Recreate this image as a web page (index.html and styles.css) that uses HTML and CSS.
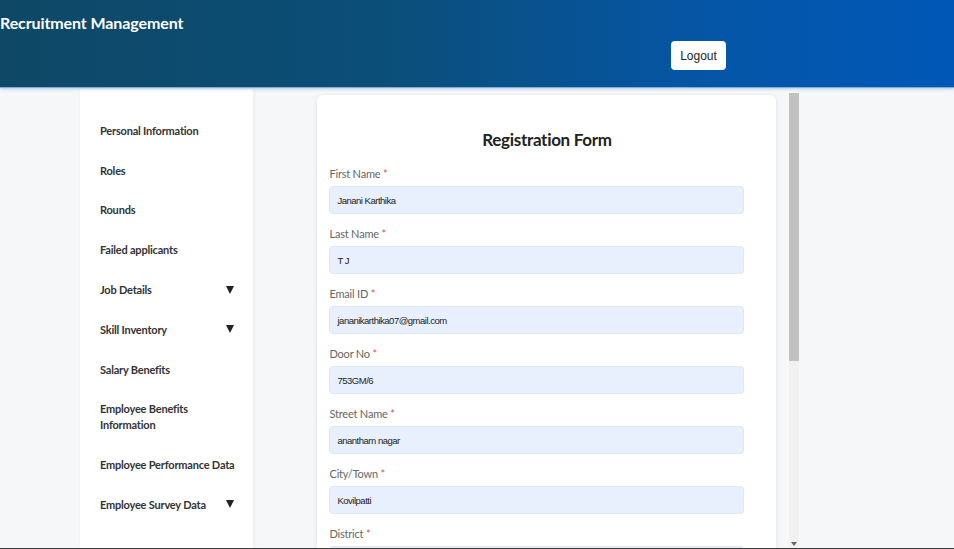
FILE: index.html
```html
<!DOCTYPE html>
<html lang="en">
<head>
<meta charset="utf-8">
<title>Recruitment Management</title>
<link rel="stylesheet" href="styles.css">
</head>
<body>
<header class="topbar">
  <h1 class="brand">Recruitment Management</h1>
  <button class="logout" type="button">Logout</button>
</header>
<div class="layout">
  <nav class="sidebar">
    <ul class="menu">
      <li class="menu-item">Personal Information</li>
      <li class="menu-item">Roles</li>
      <li class="menu-item">Rounds</li>
      <li class="menu-item">Failed applicants</li>
      <li class="menu-item">Job Details <span class="caret"></span></li>
      <li class="menu-item">Skill Inventory <span class="caret"></span></li>
      <li class="menu-item">Salary Benefits</li>
      <li class="menu-item">Employee Benefits<br>Information</li>
      <li class="menu-item">Employee Performance Data</li>
      <li class="menu-item">Employee Survey Data <span class="caret"></span></li>
    </ul>
  </nav>
  <main class="content">
    <form class="card">
      <h2 class="card-title">Registration Form</h2>
      <div class="field"><label class="label">First Name <span class="req">*</span></label><input class="input" value="Janani Karthika"></div>
      <div class="field"><label class="label">Last Name <span class="req">*</span></label><input class="input" value="T J"></div>
      <div class="field"><label class="label">Email ID <span class="req">*</span></label><input class="input" value="jananikarthika07@gmail.com"></div>
      <div class="field"><label class="label">Door No <span class="req">*</span></label><input class="input" value="753GM/6"></div>
      <div class="field"><label class="label">Street Name <span class="req">*</span></label><input class="input" value="anantham nagar"></div>
      <div class="field"><label class="label">City/Town <span class="req">*</span></label><input class="input" value="Kovilpatti"></div>
      <div class="field"><label class="label">District <span class="req">*</span></label><input class="input" value=""></div>
    </form>
  </main>
  <div class="vscroll">
    <div class="thumb"></div>
    <div class="track"></div>
    <div class="arrow"></div>
  </div>
  <div class="rest"></div>
</div>
<div class="edge"></div>
</body>
</html>
```
FILE: styles.css
```css
* { box-sizing: border-box; }
html, body { margin: 0; padding: 0; overflow: hidden; }
body {
  background: #f6f7f9;
  font-family: Lato, "Open Sans", sans-serif;
  color: #333;
  display: flex;
  flex-direction: column;
  height: 549px;
}
.topbar {
  flex: 0 0 88px;
  height: 88px;
  background: linear-gradient(90deg, #0e4866 0%, #0b4e78 40%, #0556a8 75%, #0057b6 100%);
  display: flex;
  flex-direction: column;
  border-bottom: 1px solid #7fb0d8;
  box-shadow: 0 1px 3px rgba(90,150,200,0.45);
  position: relative;
  z-index: 2;
}
.brand {
  margin: 0;
  padding: 12px 0 0 0;
  font-size: 16px;
  line-height: 22px;
  font-weight: 700;
  letter-spacing: -0.1px;
  color: #fff;
}
.logout {
  align-self: flex-start;
  margin: 7px 0 0 671px;
  width: 55px;
  height: 29px;
  background: #fff;
  border: none;
  border-radius: 4px;
  font-family: "Liberation Sans", Arial, sans-serif;
  font-size: 12px;
  color: #222;
  padding: 0;
}
.layout {
  flex: 1;
  display: flex;
  min-height: 0;
  padding-left: 80px;
}
.sidebar {
  flex: 0 0 173px;
  background: #fff;
  margin-top: 1px;
  box-shadow: 1px 0 4px rgba(0,0,0,0.06);
  padding: 22px 19px 0 20px;
}
.menu { list-style: none; margin: 0; padding: 0; }
.menu-item {
  display: flex;
  justify-content: space-between;
  align-items: center;
  padding: 11.9px 0;
  font-size: 11px;
  line-height: 16px;
  font-weight: 700;
  letter-spacing: -0.2px;
  white-space: nowrap;
  color: #333;
}
.caret {
  width: 0;
  height: 0;
  border-left: 4.5px solid transparent;
  border-right: 4.5px solid transparent;
  border-top: 8px solid #222;
  margin-top: -1px;
}
.content {
  flex: 0 0 536px;
  margin-top: 5px;
  padding: 2px 13px 0 64px;
  overflow: hidden;
}
.vscroll {
  flex: 0 0 10px;
  margin-top: 5px;
  background: #f1f1f1;
  display: flex;
  flex-direction: column;
}
.thumb { flex: 0 0 268px; background: #c1c1c1; }
.track { flex: 1; }
.arrow {
  flex: 0 0 4px;
  margin: 0 auto 2px;
  width: 0;
  height: 0;
  border-left: 3px solid transparent;
  border-right: 3px solid transparent;
  border-top: 4px solid #666;
}
.rest { flex: 1; }
.edge { flex: 0 0 1px; background: #3c3c3c; }
.card {
  width: 459px;
  background: #fff;
  border-radius: 6px;
  box-shadow: 0 1px 5px rgba(0,0,0,0.10);
  padding: 33px 12px 24px 12px;
}
.card-title {
  margin: 0 0 14px 0;
  text-align: center;
  font-size: 17px;
  line-height: 24px;
  font-weight: 700;
  letter-spacing: -0.3px;
  color: #222;
}
.field { margin-bottom: 12px; }
.label {
  display: block;
  font-size: 11px;
  line-height: 16px;
  letter-spacing: -0.2px;
  color: #666;
  margin-bottom: 4px;
}
.req { color: #d9534f; }
.input {
  display: block;
  width: 415px;
  height: 28px;
  border: 1px solid #dde6f2;
  border-radius: 4px;
  background: #e8f0fe;
  padding: 0 7px;
  font-family: "Liberation Sans", Arial, sans-serif;
  font-size: 9.5px;
  letter-spacing: -0.5px;
  color: #222;
}
```
